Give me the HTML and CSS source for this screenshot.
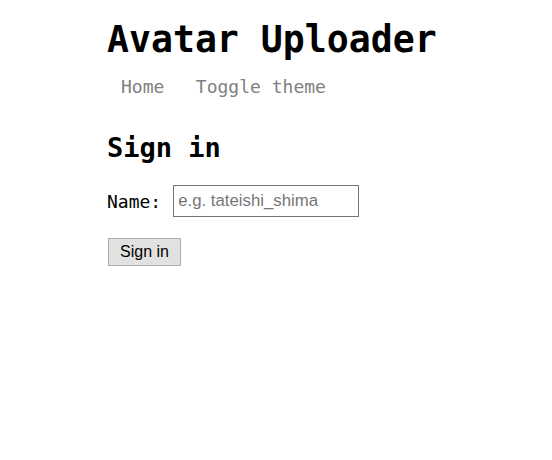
FILE: index.html
```html
<!DOCTYPE html>
<html lang="en">
<head>
<meta charset="utf-8">
<title>Avatar Uploader</title>
<link rel="stylesheet" href="styles.css">
</head>
<body>
<main class="page">
  <h1 class="title">Avatar Uploader</h1>
  <nav class="nav">
    <a class="nav-link" href="#">Home</a>
    <a class="nav-link" href="#">Toggle theme</a>
  </nav>
  <h2 class="heading">Sign in</h2>
  <form class="form">
    <div class="row">
      <label class="label" for="name">Name:</label>
      <input class="input" id="name" type="text" placeholder="e.g. tateishi_shima">
    </div>
    <button class="button" type="button">Sign in</button>
  </form>
</main>
</body>
</html>
```

FILE: styles.css
```css
html, body {
  margin: 0;
  padding: 0;
  background: #ffffff;
}

body {
  font-family: "DejaVu Sans Mono", "Liberation Mono", monospace;
  font-size: 18px;
  color: #000000;
}

.page {
  width: 338px;
  margin: 0 auto;
}

.title {
  margin: 19px 0 0;
  font-size: 36.5px;
  line-height: 42px;
  font-weight: bold;
}

.nav {
  display: flex;
  gap: 31.5px;
  margin: 15px 0 0 14px;
  line-height: 21px;
}

.nav-link {
  color: #808080;
  text-decoration: none;
}

.heading {
  margin: 35px 0 0;
  font-size: 27px;
  line-height: 31px;
  font-weight: bold;
}

.form {
  margin: 22px 0 0;
  display: flex;
  flex-direction: column;
  align-items: flex-start;
}

.row {
  display: flex;
  align-items: center;
  gap: 12px;
}

.label {
  line-height: 21px;
}

.input {
  box-sizing: border-box;
  width: 186px;
  height: 32px;
  margin: 0;
  padding: 0 4px;
  border: 1px solid #767676;
  border-radius: 0;
  font-family: "Liberation Sans", Arial, sans-serif;
  font-size: 16.8px;
  color: #000;
  outline: none;
}

.input::placeholder {
  color: #757575;
}

.button {
  box-sizing: border-box;
  margin: 21px 0 0 1px;
  width: 73px;
  height: 28px;
  padding: 0;
  border: 1px solid #adadad;
  border-radius: 0;
  background: #e1e1e1;
  font-family: "Liberation Sans", Arial, sans-serif;
  font-size: 16px;
  color: #000;
}
```
